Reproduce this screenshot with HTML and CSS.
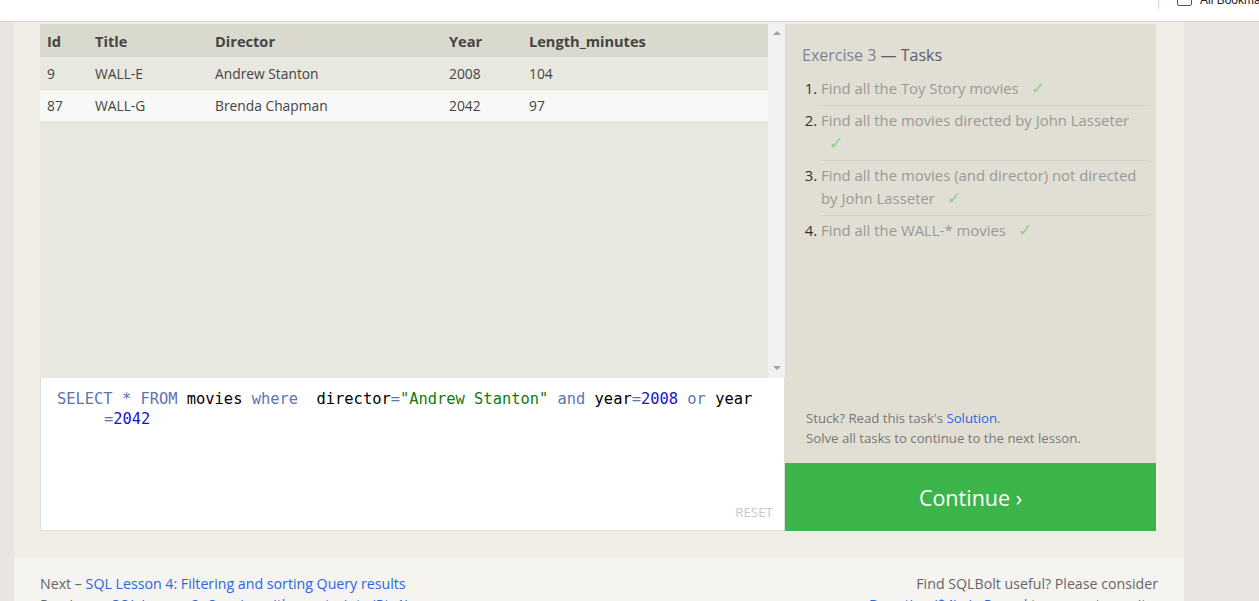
FILE: index.html
```html
<!DOCTYPE html>
<html lang="en">
<head>
<meta charset="utf-8">
<title>SQLBolt - Exercise 3</title>
<link rel="stylesheet" href="styles.css">
</head>
<body>
<div class="chrome">
  <span class="chrome-sep"></span>
  <span class="chrome-folder"></span>
  <span class="chrome-label">All Bookmarks</span>
</div>
<div class="page">
  <div class="exercise">
    <div class="work">
      <div class="results">
        <div class="table-wrap">
          <table class="grid">
            <thead>
              <tr><th class="c-id">Id</th><th class="c-title">Title</th><th class="c-dir">Director</th><th class="c-year">Year</th><th class="c-len">Length_minutes</th></tr>
            </thead>
            <tbody>
              <tr class="odd"><td>9</td><td>WALL-E</td><td>Andrew Stanton</td><td>2008</td><td>104</td></tr>
              <tr class="even"><td>87</td><td>WALL-G</td><td>Brenda Chapman</td><td>2042</td><td>97</td></tr>
            </tbody>
          </table>
        </div>
        <div class="scrollbar">
          <span class="arrow up"></span>
          <span class="arrow down"></span>
        </div>
      </div>
      <div class="editor">
        <div class="code"><span class="kw">SELECT</span> <span class="op">*</span> <span class="kw">FROM</span> movies <span class="kw">where</span>  director<span class="op">=</span><span class="str">"Andrew Stanton"</span> <span class="kw">and</span> year<span class="op">=</span><span class="num">2008</span> <span class="kw">or</span> year</div>
        <div class="code wrap"><span class="op">=</span><span class="num">2042</span></div>
        <div class="reset">RESET</div>
      </div>
    </div>
    <div class="side">
      <div class="tasks">
        <h3 class="tasks-title"><span class="ex">Exercise 3</span> — Tasks</h3>
        <ol class="task-list">
          <li><span class="t">Find all the Toy Story movies</span> <span class="check">✓</span></li>
          <li><span class="t">Find all the movies directed by John Lasseter</span> <span class="check">✓</span></li>
          <li><span class="t">Find all the movies (and director) not directed by John Lasseter</span> <span class="check">✓</span></li>
          <li><span class="t">Find all the WALL-* movies</span> <span class="check">✓</span></li>
        </ol>
        <div class="stuck">
          <p>Stuck? Read this task's <a href="#">Solution</a>.</p>
          <p>Solve all tasks to continue to the next lesson.</p>
        </div>
      </div>
      <a class="continue" href="#">Continue ›</a>
    </div>
  </div>
  <div class="footer">
    <div class="nav">
      <p>Next – <a href="#">SQL Lesson 4: Filtering and sorting Query results</a></p>
      <p>Previous – <a href="#">SQL Lesson 2: Queries with constraints (Pt. 1)</a></p>
    </div>
    <div class="donate">
      <p>Find SQLBolt useful? Please consider</p>
      <p><a href="#">Donating ($4) via Paypal</a> to support our site.</p>
    </div>
  </div>
</div>
</body>
</html>
```

FILE: styles.css
```css
* { box-sizing: border-box; }
html, body { margin: 0; padding: 0; }
body {
  background: #e8e5e2;
  font-family: "Open Sans", "Noto Sans", sans-serif;
  color: #444;
  height: 601px;
  overflow: hidden;
}
a { color: #2a67e0; text-decoration: none; }
p { margin: 0; }

.chrome {
  position: relative;
  height: 22px;
  background: #fff;
  border-bottom: 1px solid #d3d3d3;
  overflow: hidden;
}
.chrome-sep {
  position: absolute;
  left: 1158px;
  top: 0;
  width: 1px;
  height: 9px;
  background: #f2c6dc;
}
.chrome-folder {
  position: absolute;
  left: 1177px;
  top: -8px;
  width: 15px;
  height: 14px;
  border: 1.5px solid #555;
  border-radius: 2px;
}
.chrome-label {
  position: absolute;
  left: 1200px;
  top: -7px;
  white-space: nowrap;
  font-family: "Liberation Sans", sans-serif;
  font-size: 12px;
  line-height: 14px;
  color: #222;
}

.page {
  width: 1170px;
  margin-left: 14px;
  background: #efede6;
}
.exercise {
  display: flex;
  padding: 2px 28px 27px 26px;
}
.work {
  width: 745px;
  display: flex;
  flex-direction: column;
}
.results {
  height: 354px;
  display: flex;
}
.table-wrap {
  flex: 1;
  background: #e9e8e0;
}
.grid {
  width: 100%;
  border-collapse: collapse;
  font-size: 13.8px;
}
.grid th, .grid td {
  text-align: left;
  padding: 0 7px;
  vertical-align: middle;
}
.grid th {
  background: #dad9ce;
  height: 33px;
  padding-top: 0;
  font-weight: 700;
  font-size: 14.6px;
  color: #444;
}
.grid td { height: 32px; color: #444; padding-top: 1px; }
.grid tr.odd td { background: #e9e8e0; border-bottom: 1px solid #dededa; }
.grid tr.even td { background: #f8f8f7; }
.c-id { width: 48px; }
.c-title { width: 120px; }
.c-dir { width: 234px; }
.c-year { width: 80px; }

.scrollbar {
  width: 17px;
  background: #f1f1f1;
  display: flex;
  flex-direction: column;
  justify-content: space-between;
  align-items: center;
  padding: 7px 0 8px;
}
.arrow { width: 0; height: 0; border-left: 4px solid transparent; border-right: 4px solid transparent; }
.arrow.up { border-bottom: 4px solid #a3a3a3; }
.arrow.down { border-top: 4px solid #a3a3a3; }

.editor {
  position: relative;
  height: 153px;
  background: #fff;
  border: 1px solid #e0ded8;
  border-top: none;
  padding: 11px 16px 0;
  font-family: "DejaVu Sans Mono", monospace;
  font-size: 15.4px;
  line-height: 20px;
  color: #000;
}
.code { white-space: pre; }
.code.wrap { padding-left: 47px; }
.kw { color: #6072b4; }
.op { color: #6072b4; }
.str { color: #107a10; }
.num { color: #1515c8; }
.reset {
  position: absolute;
  right: 11px;
  bottom: 8px;
  font-family: "Open Sans", sans-serif;
  font-size: 13.4px;
  color: #c8c8c8;
}

.side {
  width: 371px;
  display: flex;
  flex-direction: column;
}
.tasks {
  flex: 1;
  background: #e1dfd4;
  padding: 20px 8px 0 17px;
  display: flex;
  flex-direction: column;
}
.tasks-title {
  margin: 0 0 8px;
  font-weight: 400;
  font-size: 16px;
  line-height: 22px;
  color: #58606f;
}
.tasks-title .ex { color: #7c8394; }
.task-list {
  margin: 0;
  padding: 0 0 0 19px;
  font-size: 14.9px;
  line-height: 23px;
  color: #333;
}
.task-list li {
  padding: 3px 0 5px;
  border-bottom: 1px solid #d4d2c7;
}
.task-list li:last-child { border-bottom: none; }
.task-list .t { color: #999; }
.task-list .check { color: #8fd08f; margin-left: 8px; font-size: 17px; line-height: 1; }
.stuck {
  margin-top: auto;
  padding: 0 0 15px 4px;
  font-size: 13.2px;
  line-height: 20px;
  color: #777;
}
.continue {
  display: flex;
  align-items: center;
  justify-content: center;
  height: 68px;
  background: #3bb54a;
  color: #fff;
  font-size: 21.5px;
}

.footer {
  display: flex;
  justify-content: space-between;
  background: #f5f4f0;
  padding: 15px 26px 0;
  font-size: 14.2px;
  line-height: 21px;
  color: #666;
  height: 43px;
}
.donate { text-align: right; }
```
